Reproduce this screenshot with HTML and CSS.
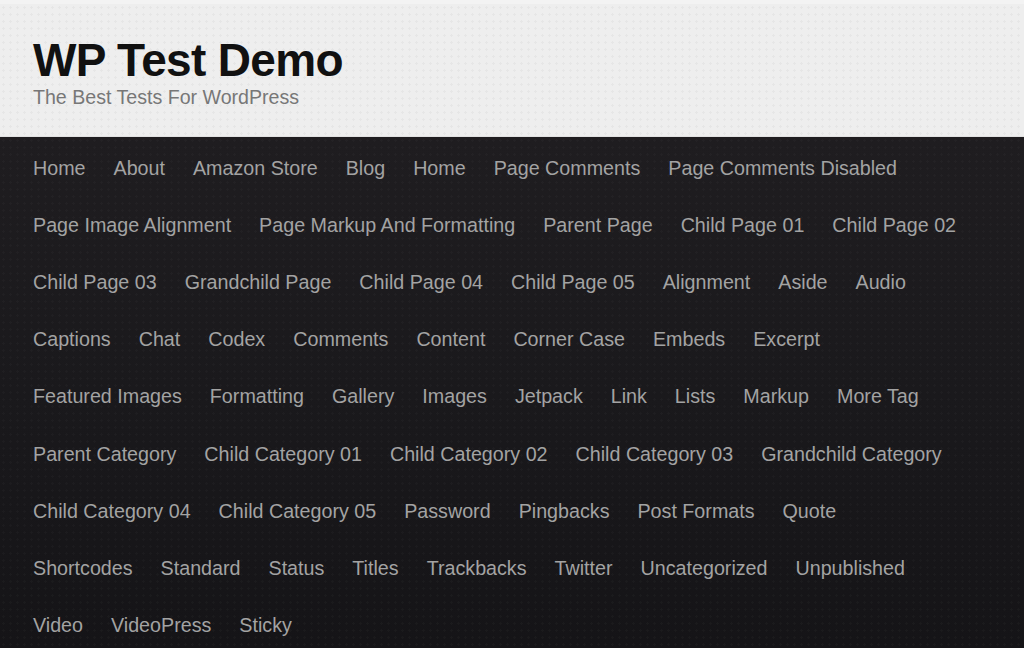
FILE: index.html
```html
<!DOCTYPE html>
<html lang="en">
<head>
<meta charset="utf-8">
<title>WP Test Demo</title>
<link rel="stylesheet" href="styles.css">
</head>
<body>
<header class="site-header">
  <h1 class="site-title">WP Test Demo</h1>
  <p class="site-tagline">The Best Tests For WordPress</p>
</header>
<nav class="site-nav">
  <ul class="menu-row">
    <li>Home</li><li>About</li><li>Amazon Store</li><li>Blog</li><li>Home</li><li>Page Comments</li><li>Page Comments Disabled</li>
  </ul>
  <ul class="menu-row">
    <li>Page Image Alignment</li><li>Page Markup And Formatting</li><li>Parent Page</li><li>Child Page 01</li><li>Child Page 02</li>
  </ul>
  <ul class="menu-row">
    <li>Child Page 03</li><li>Grandchild Page</li><li>Child Page 04</li><li>Child Page 05</li><li>Alignment</li><li>Aside</li><li>Audio</li>
  </ul>
  <ul class="menu-row">
    <li>Captions</li><li>Chat</li><li>Codex</li><li>Comments</li><li>Content</li><li>Corner Case</li><li>Embeds</li><li>Excerpt</li>
  </ul>
  <ul class="menu-row">
    <li>Featured Images</li><li>Formatting</li><li>Gallery</li><li>Images</li><li>Jetpack</li><li>Link</li><li>Lists</li><li>Markup</li><li>More Tag</li>
  </ul>
  <ul class="menu-row">
    <li>Parent Category</li><li>Child Category 01</li><li>Child Category 02</li><li>Child Category 03</li><li>Grandchild Category</li>
  </ul>
  <ul class="menu-row">
    <li>Child Category 04</li><li>Child Category 05</li><li>Password</li><li>Pingbacks</li><li>Post Formats</li><li>Quote</li>
  </ul>
  <ul class="menu-row">
    <li>Shortcodes</li><li>Standard</li><li>Status</li><li>Titles</li><li>Trackbacks</li><li>Twitter</li><li>Uncategorized</li><li>Unpublished</li>
  </ul>
  <ul class="menu-row">
    <li>Video</li><li>VideoPress</li><li>Sticky</li>
  </ul>
</nav>
</body>
</html>
```

FILE: styles.css
```css
html, body {
  margin: 0;
  padding: 0;
}
body {
  width: 1024px;
  height: 648px;
  overflow: hidden;
  font-family: "Liberation Sans", Arial, sans-serif;
  background: #161518;
}
.site-header {
  box-sizing: border-box;
  height: 137px;
  padding: 33px 33px 0;
  border-top: 4px solid #f3f3f3;
  background-color: #eeeeee;
  background-image: radial-gradient(rgba(0,0,0,0.035) 1px, transparent 1.2px);
  background-size: 7px 7px;
  border-bottom: 1px solid #e2e2e2;
}
.site-title {
  margin: 0;
  font-size: 46px;
  line-height: 46px;
  font-weight: bold;
  letter-spacing: -0.65px;
  color: #111111;
}
.site-tagline {
  margin: 4px 0 0;
  font-size: 19.6px;
  line-height: 20px;
  color: #777777;
}
.site-nav {
  height: 511px;
  padding: 2.6px 33px 0;
  box-sizing: border-box;
  background-color: #1a191c;
  background-image:
    radial-gradient(rgba(255,255,255,0.025) 1px, transparent 1.2px),
    linear-gradient(to bottom, #1f1d20 0%, #1a191c 50%, #151417 100%);
  background-size: 7px 7px, 100% 100%;
}
.menu-row {
  display: flex;
  column-gap: 28px;
  margin: 0;
  padding: 0;
  list-style: none;
  white-space: nowrap;
}
.menu-row li {
  font-size: 19.7px;
  line-height: 57.2px;
  color: #a3a3a3;
}
```
